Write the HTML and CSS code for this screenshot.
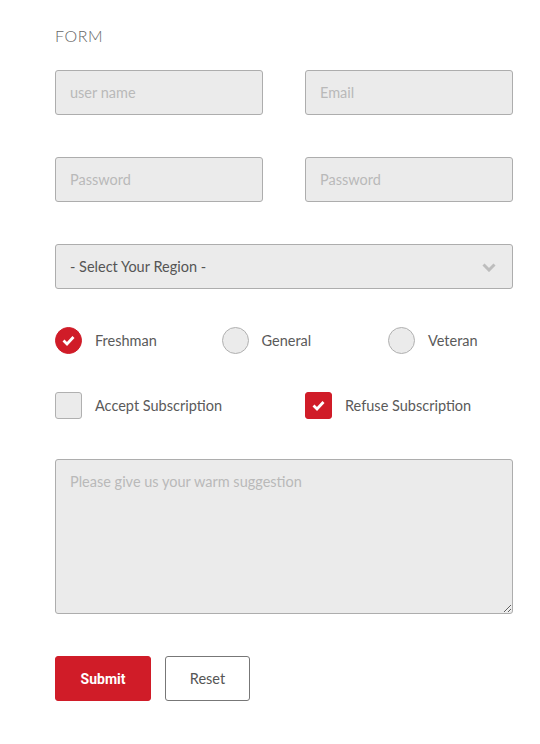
FILE: index.html
```html
<!DOCTYPE html>
<html>
<head>
<meta charset="utf-8">
<link rel="stylesheet" href="styles.css">
</head>
<body>
<form class="form">
  <h2 class="title">FORM</h2>
  <div class="row two">
    <input class="field" type="text" placeholder="user name">
    <input class="field" type="text" placeholder="Email">
  </div>
  <div class="row two">
    <input class="field" type="password" placeholder="Password">
    <input class="field" type="password" placeholder="Password">
  </div>
  <div class="row select">
    <span class="select-text">- Select Your Region -</span>
    <svg class="chev" width="14" height="10" viewBox="0 0 14 10"><path d="M1.5 2.5 L7 8 L12.5 2.5" fill="none" stroke="#bdbdbd" stroke-width="3"/></svg>
  </div>
  <div class="radios">
    <label class="opt"><span class="radio on"><svg width="13" height="11" viewBox="0 0 13 11"><path d="M1.5 5.5 L5 9 L11.5 2" fill="none" stroke="#fff" stroke-width="2.8"/></svg></span>Freshman</label>
    <label class="opt"><span class="radio"></span>General</label>
    <label class="opt"><span class="radio"></span>Veteran</label>
  </div>
  <div class="checks">
    <label class="opt"><span class="box"></span>Accept Subscription</label>
    <label class="opt"><span class="box on"><svg width="13" height="11" viewBox="0 0 13 11"><path d="M1.5 5.5 L5 9 L11.5 2" fill="none" stroke="#fff" stroke-width="2.8"/></svg></span>Refuse Subscription</label>
  </div>
  <textarea class="area" placeholder="Please give us your warm suggestion"></textarea>
  <div class="buttons">
    <button type="button" class="btn submit">Submit</button>
    <button type="button" class="btn reset">Reset</button>
  </div>
</form>
</body>
</html>
```
FILE: styles.css
```css
html, body { margin: 0; padding: 0; background: #fff; }
body { font-family: "Lato", "Open Sans", sans-serif; color: #555; }
.form { width: 458px; padding: 0 0 0 55px; margin: 0; }
.title { margin: 0; padding-top: 27px; height: 70px; box-sizing: border-box; font-size: 16px; font-weight: 300; color: #666; letter-spacing: 0.6px; line-height: 18px; }
.row { display: flex; }
.two { gap: 42px; margin-bottom: 42px; }
.field { box-sizing: border-box; width: 208px; height: 45px; border: 1px solid #adadad; border-radius: 3px; background: #ebebeb; padding: 0 14px; font-family: inherit; font-size: 14.5px; color: #555; outline: none; }
.field::placeholder, .area::placeholder { color: #b9b9b9; }
.select { box-sizing: border-box; height: 45px; border: 1px solid #adadad; border-radius: 3px; background: #ebebeb; align-items: center; justify-content: space-between; padding: 0 16px 0 14px; font-size: 14.5px; color: #555; }
.chev { display: block; }
.radios { display: flex; margin-top: 38px; height: 27px; }
.radios .opt { width: 166.5px; flex: none; }
.opt { display: flex; align-items: center; font-size: 14.5px; color: #5a5a5a; }
.radio { box-sizing: border-box; width: 27px; height: 27px; border-radius: 50%; border: 1px solid #b0b0b0; background: #ebebeb; margin-right: 13px; display: flex; align-items: center; justify-content: center; flex: none; }
.radio.on { background: #d01c28; border-color: #d01c28; }
.checks { display: flex; gap: 42px; margin-top: 38px; height: 27px; }
.checks .opt { width: 208px; }
.box { box-sizing: border-box; width: 27px; height: 27px; border-radius: 3px; border: 1px solid #b0b0b0; background: #ebebeb; margin-right: 13px; display: flex; align-items: center; justify-content: center; flex: none; }
.box.on { background: #d01c28; border-color: #d01c28; }
.area { display: block; box-sizing: border-box; width: 458px; height: 155px; margin-top: 40px; border: 1px solid #adadad; border-radius: 3px; background: #ebebeb; padding: 13px 14px; font-family: inherit; font-size: 14.5px; color: #555; resize: both; outline: none; }
.buttons { display: flex; gap: 14px; margin-top: 42px; }
.btn { box-sizing: border-box; height: 45px; border-radius: 3px; font-size: 14px; cursor: pointer; padding: 0; }
.submit { width: 96px; background: #d01c28; border: 1px solid #d01c28; color: #fff; font-family: "Roboto", sans-serif; font-weight: 700; }
.reset { width: 85px; background: #fff; border: 1px solid #777; color: #555; font-family: "Lato", sans-serif; font-size: 14.5px; }
```
